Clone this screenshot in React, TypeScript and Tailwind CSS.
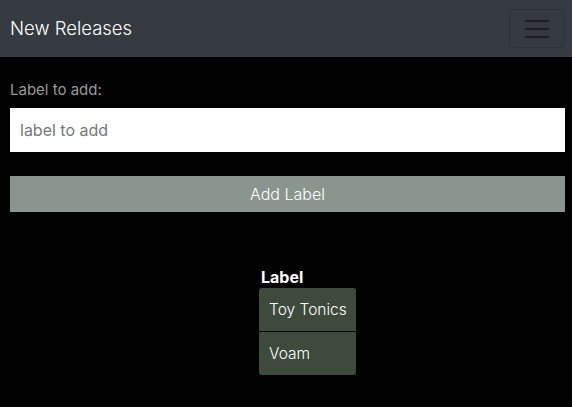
export default function App() {
  return (
    <div
      className="min-h-[407px] bg-black text-white"
      style={{ fontFamily: "Inter, 'Noto Sans', sans-serif" }}
    >
      <nav className="flex h-[57px] items-center justify-between bg-[#343a40] pl-[10px] pr-[7px]">
        <span className="text-[18.5px] font-light leading-none text-white">New Releases</span>
        <button className="flex h-[39px] w-[56px] flex-col items-center justify-center gap-[6px] rounded-[4px] border border-[#2c3136]">
          <span className="block h-[2px] w-[24px] bg-[#1e2124]" />
          <span className="block h-[2px] w-[24px] bg-[#1e2124]" />
          <span className="block h-[2px] w-[24px] bg-[#1e2124]" />
        </button>
      </nav>

      <div className="pl-[10px] pr-[7px] pt-[23px]">
        <label className="block text-[15px] leading-[20px] text-[#9a9a9a]">Label to add:</label>
        <input
          className="mt-[8px] block h-[44px] w-full bg-white px-[10px] text-[16px] text-black placeholder:text-[#777] outline-none"
          placeholder="label to add"
        />
        <button className="mt-[24px] block h-[36px] w-full bg-[#8a958e] text-[16px] font-light text-white">
          Add Label
        </button>
      </div>

      <div className="pl-[259px] pt-[55px]">
        <div className="w-[97px] whitespace-nowrap">
          <div className="pl-[2px] text-[16px] font-bold leading-[20px]">Label</div>
          <div className="mt-[1px] flex flex-col gap-[1px]">
            <div className="flex h-[43px] items-center rounded-t-[3px] bg-[#3e4b3c] px-[10px] text-[15.5px] font-light">
              Toy Tonics
            </div>
            <div className="flex h-[43px] items-center rounded-b-[3px] bg-[#3e4b3c] px-[10px] text-[15.5px] font-light">
              Voam
            </div>
          </div>
        </div>
      </div>
    </div>
  );
}
